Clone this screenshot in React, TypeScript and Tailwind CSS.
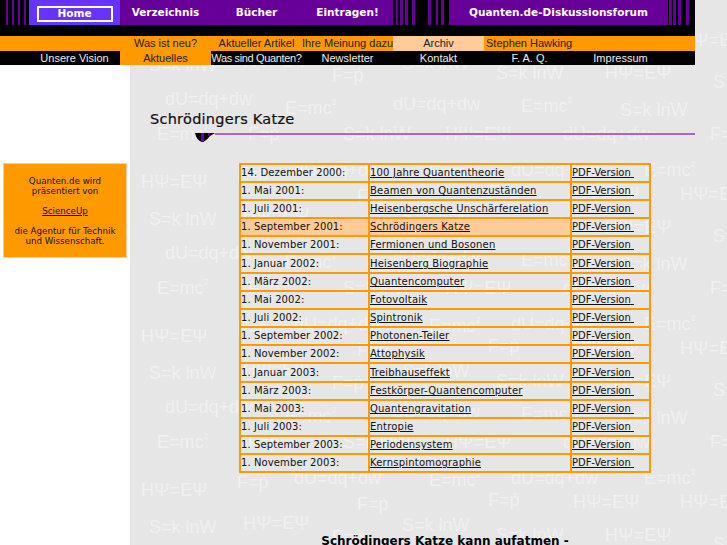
import React from "react";

type F = { k: "H" | "S" | "D" | "E" | "P"; x: number; y: number };
const items: F[] = [
  { k: "H", x: 141, y: 182 }, { k: "S", x: 149, y: 65 }, { k: "D", x: 165, y: 99 }, { k: "E", x: 157, y: 134 },
  { k: "P", x: 237, y: 174 }, { k: "D", x: 294, y: 170 }, { k: "S", x: 343, y: 134 }, { k: "P", x: 248, y: 134 },
  { k: "H", x: 243, y: 215 }, { k: "P", x: 357, y: 196 }, { k: "S", x: 402, y: 217 }, { k: "E", x: 429, y: 172 },
  { k: "D", x: 511, y: 170 }, { k: "E", x: 644, y: 170 }, { k: "P", x: 488, y: 192 }, { k: "H", x: 573, y: 194 },
  { k: "H", x: 680, y: 194 }, { k: "S", x: 496, y: 73 }, { k: "H", x: 605, y: 73 }, { k: "P", x: 332, y: 75 },
  { k: "E", x: 285, y: 108 }, { k: "D", x: 393, y: 104 }, { k: "E", x: 521, y: 106 }, { k: "S", x: 620, y: 110 },
  { k: "H", x: 445, y: 134 }, { k: "D", x: 563, y: 134 }, { k: "P", x: 710, y: 134 }, { k: "S", x: 713, y: 82 },
];

function Formula({ k }: { k: F["k"] }) {
  if (k === "H") return <span className="tracking-[0.2px]">HΨ=EΨ</span>;
  if (k === "S") return <span>S=k lnW</span>;
  if (k === "D") return <span>dU=dq+dw</span>;
  if (k === "P") return <span>F=ṗ</span>;
  return (
    <span>
      E=mc<span className="relative top-[-9px] text-[9px]">2</span>
    </span>
  );
}

const rows: [string, string][] = [
  ["14. Dezember 2000:", "100 Jahre Quantentheorie"],
  ["1. Mai 2001:", "Beamen von Quantenzuständen"],
  ["1. Juli 2001:", "Heisenbergsche Unschärferelation"],
  ["1. September 2001:", "Schrödingers Katze"],
  ["1. November 2001:", "Fermionen und Bosonen"],
  ["1. Januar 2002:", "Heisenberg Biographie"],
  ["1. März 2002:", "Quantencomputer"],
  ["1. Mai 2002:", "Fotovoltaik"],
  ["1. Juli 2002:", "Spintronik"],
  ["1. September 2002:", "Photonen-Teiler"],
  ["1. November 2002:", "Attophysik"],
  ["1. Januar 2003:", "Treibhauseffekt"],
  ["1. März 2003:", "Festkörper-Quantencomputer"],
  ["1. Mai 2003:", "Quantengravitation"],
  ["1. Juli 2003:", "Entropie"],
  ["1. September 2003:", "Periodensystem"],
  ["1. November 2003:", "Kernspintomographie"],
];

const sub1 = ["", "Was ist neu?", "Aktueller Artikel", "Ihre Meinung dazu", "Archiv"];
const sub2 = ["Unsere Vision", "Aktuelles", "Was sind Quanten?", "Newsletter", "Kontakt", "F. A. Q.", "Impressum"];

function Stripe({ className }: { className: string }) {
  return <span className={"block h-full bg-[#660099] " + className} />;
}

export default function App() {
  return (
    <div className="relative h-[545px] w-[727px] overflow-hidden bg-white font-['DejaVu_Sans',sans-serif] text-[#111]">
      <div className="absolute inset-y-0 left-[130px] right-0 bg-[#e6e6e6]" />
      <div className="absolute inset-0 font-['Liberation_Sans',sans-serif] text-[18px] leading-[18px] text-[#f0f0f0]">
        {items.flatMap((f, i) =>
          [-154, 0, 154, 308, 462].map((o) => (
            <div key={i + "-" + o} className="absolute whitespace-pre" style={{ left: f.x, top: f.y + o - 9 }}>
              <Formula k={f.k} />
            </div>
          ))
        )}
      </div>

      <div className="relative">
        <header className="w-[695px] bg-black font-['Liberation_Sans',sans-serif] text-[11px]">
          <nav className="flex h-[25px] font-['DejaVu_Sans',sans-serif] text-[10.5px] font-bold text-white">
            <div className="flex w-[29px] gap-[4px] pl-[6px]">
              <Stripe className="w-[2px]" />
              <Stripe className="w-[2px]" />
              <Stripe className="w-[2px]" />
              <Stripe className="w-[2px]" />
            </div>
            <div className="flex w-[91px] items-start justify-center bg-[#6633ff] pt-[6px]">
              <span className="flex h-[16px] w-[76px] items-center justify-center border-2 border-white">Home</span>
            </div>
            <div className="grid w-[273px] grid-cols-3 items-center bg-[#660099] text-center">
              <span>Verzeichnis</span>
              <span>Bücher</span>
              <span>Eintragen!</span>
            </div>
            <div className="flex w-[56px]">
              <Stripe className="ml-[3px] w-[2px]" />
              <Stripe className="ml-[2px] w-[3px]" />
              <Stripe className="ml-[2px] w-[3px]" />
              <Stripe className="ml-[4px] w-[3px]" />
              <Stripe className="ml-[13px] w-[3px]" />
              <Stripe className="ml-[5px] w-[2px]" />
              <Stripe className="ml-[3px] w-[3px]" />
            </div>
            <div className="flex w-[219px] items-center justify-center bg-[#660099]">Quanten.de-Diskussionsforum</div>
            <div className="flex w-[27px]">
              <Stripe className="ml-[1px] w-[3px]" />
              <Stripe className="ml-[1px] w-[3px]" />
              <Stripe className="ml-[2px] w-[3px]" />
              <Stripe className="ml-[5px] w-[3px]" />
            </div>
          </nav>
          <div className="mt-[11px] grid h-[15px] grid-cols-[29px_repeat(7,91px)_1fr] items-stretch bg-[#ff9900] leading-[15px] text-[#222]">
            {sub1.map((t, i) => (
              <span key={i} className={"whitespace-nowrap text-center " + (i === 0 ? "col-span-2" : "") + (i === 4 ? " bg-[#ffcc99]" : "")}>
                {t}
              </span>
            ))}
            <span className="col-span-3 pl-[2px]">Stephen Hawking</span>
          </div>
          <div className="grid h-[14px] grid-cols-[29px_repeat(7,91px)_1fr] leading-[14px] text-[#eee]">
            <span />
            {sub2.map((t, i) => (
              <span
                key={t}
                className={"whitespace-nowrap text-center " + (i === 1 ? "bg-[#ff9900] text-[#222]" : "") + (i === 2 ? "tracking-[-0.35px]" : "")}
              >
                {t}
              </span>
            ))}
          </div>
        </header>

        <div className="flex">
          <aside className="w-[130px] pl-[3px] pt-[98px]">
            <div className="h-[95px] w-[124px] border border-[#ffcc99] bg-[#ff9900] pt-[12px] text-center text-[8.7px] leading-[10px] text-[#111]">
              Quanten.de wird
              <br />
              präsentiert von
              <br />
              <br />
              <a className="underline">ScienceUp</a>
              <br />
              <br />
              die Agentur für Technik
              <br />
              und Wissenschaft.
            </div>
          </aside>
          <main className="w-[597px]">
            <h1 className="ml-[20px] mt-[45px] h-[18px] text-[14.5px] leading-[18px] font-normal tracking-[0.25px] text-[#111] [-webkit-text-stroke:0.2px_#111]">Schrödingers Katze</h1>
            <div className="mt-[5px] flex h-[10px] w-[565px] items-start pl-[65px]">
              <svg width="20" height="9" viewBox="0 0 20 9" className="block shrink-0">
                <path d="M0 0H20L15 3Q10 9 7 9Q2 8 0 0Z" fill="#000" />
                <rect x="6" y="0" width="3" height="9" fill="#660099" />
                <rect x="13" y="0" width="2" height="3" fill="#660099" />
              </svg>
              <span className="mt-0 block h-[2px] flex-1 bg-[#aa66cc]" />
            </div>
            <table className="ml-[109px] mt-[20px] w-[410px] table-fixed border-collapse border-2 border-[#ff9900] text-[10px] leading-[14px]">
              <colgroup>
                <col className="w-[129px]" />
                <col className="w-[202px]" />
                <col className="w-[79px]" />
              </colgroup>
              <tbody>
                {rows.map(([d, t], i) => (
                  <tr key={t} className={i === 5 || i === 11 ? "h-[19px]" : "h-[18px]"}>
                    <td className={"border-2 border-[#ff9900] p-0 tracking-[0.1px] whitespace-nowrap " + (i === 3 ? "bg-[#ffcc99]" : "")}>{d}</td>
                    <td className={"border-2 border-[#ff9900] p-0 tracking-[0.2px] whitespace-nowrap " + (i === 3 ? "bg-[#ffcc99]" : "")}>
                      <a className="underline">{t}</a>
                    </td>
                    <td className="border-2 border-[#ff9900] p-0 whitespace-pre tracking-[-0.05px]">
                      <a className="underline">PDF-Version{" "}</a>
                    </td>
                  </tr>
                ))}
              </tbody>
            </table>
            <p className="mt-[61px] w-[630px] text-center text-[12px] leading-[14px] font-bold text-black">Schrödingers Katze kann aufatmen -</p>
          </main>
        </div>
      </div>
    </div>
  );
}
